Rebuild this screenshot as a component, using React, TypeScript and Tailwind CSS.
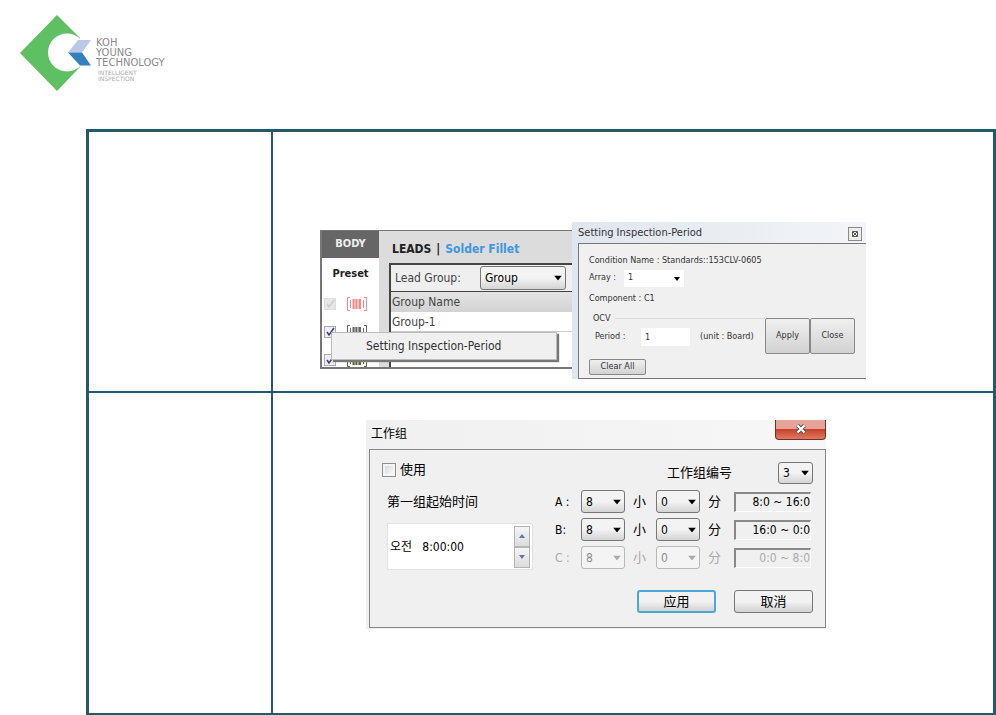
import React from 'react';
import clsx from 'clsx';

interface SelectProps {
  label: string;
  value: string;
  className?: string;
  disabled?: boolean;
}

const Select: React.FC<SelectProps> = ({ label, value, className, disabled }) => (
  <div className={clsx('relative', className)}>
    <select
      aria-label={label}
      disabled={disabled}
      defaultValue={value}
      className={clsx(
        'block h-full w-full appearance-none rounded-[3px] border pl-1 outline-none',
        disabled
          ? 'border-[#b8b8b8] bg-[#f4f4f4] text-[#8d8d8d]'
          : 'border-[#777] bg-linear-to-b from-[#f3f3f3] from-50% to-[#d4d4d4] text-black',
      )}
    >
      <option>{value}</option>
    </select>
    <svg
      viewBox="0 0 8 5"
      className={clsx(
        'pointer-events-none absolute top-1/2 right-1 h-[5px] w-2 -translate-y-1/2',
        disabled ? 'fill-[#aaa]' : 'fill-black',
      )}
    >
      <path d="M0 0h8L4 5z" />
    </svg>
  </div>
);

const Logo = () => (
  <header className="flex items-start pt-3 pl-[18px]">
    <svg viewBox="18 12 76 82" className="h-[82px] w-[76px]">
      <path d="M57 15L20 53l37 38 24-25V39z" fill="#5fc063" />
      <circle cx="67" cy="52.500" r="19" fill="#fff" />
      <path d="M80 37h12v30H80z" fill="#fff" />
      <path d="M78 40h13l-9 12.500H68z" fill="#b9c9e8" />
      <path d="M68 52.500h14L91 65.500H80z" fill="#3480bd" />
    </svg>
    <div className="pt-[26px] pl-0.5 font-['DejaVu_Sans'] text-[10px] leading-[10px] text-[#8a8a8a]">
      {['Koh', 'Young', 'Technology'].map((word) => (
        <div key={word} className="uppercase">
          {word}
        </div>
      ))}
      <div className="pt-0.5 pl-0.5 text-[6px] leading-[6px] text-[#aaa] uppercase">
        Intelligent
        <br />
        Inspection
      </div>
    </div>
  </header>
);

const presets = [
  { id: 1, checked: true, disabled: true, icon: 'text-[#f58a8a]' },
  { id: 2, checked: true, disabled: false, icon: 'text-[#666]' },
  { id: 3, checked: true, disabled: false, icon: 'text-[#5b6335]' },
];

const LeadsPanel = () => (
  <div className="relative mt-2 h-[140px] w-[252px] text-[12px]">
    <div className="flex h-[139px] overflow-hidden border-t border-b-2 border-l-2 border-[#777] bg-[#dcdcdc]">
      <div className="w-[57px] shrink-0 bg-white">
        <div className="flex h-[27px] items-center justify-center bg-[#666] text-[11px] font-bold text-[#eee]">
          BODY
        </div>
        <div className="flex h-8 items-center justify-center text-[11px] font-bold text-[#222]">Preset</div>
        {presets.map((p) => (
          <div key={p.id} className="flex h-7 items-center gap-[10px] pl-0.5">
            <label className="relative block size-3">
              <input
                type="checkbox"
                aria-label={`Preset ${p.id}`}
                defaultChecked={p.checked}
                disabled={p.disabled}
                className="block size-3 appearance-none border border-[#aaa] bg-[#eeeefa] disabled:border-[#ddd] disabled:bg-[#e8e8e8]"
              />
              <svg
                viewBox="0 0 12 12"
                className={clsx('absolute inset-0 fill-none', p.disabled ? 'stroke-[#ccc]' : 'stroke-[#3c3c70]')}
              >
                <path d="M3 6l2 3 5-7" strokeWidth="1.500" />
              </svg>
            </label>
            <svg viewBox="0 0 22 16" className={clsx('h-4 w-[22px] fill-none stroke-current', p.icon)}>
              <path d="M4 1.500H1.500v13H4M18 1.500h2.500v13H18" />
              <path d="M4.500 4v8M17.500 4v8" />
              <path d="M7.500 3v10M10.500 3v10M14 3v10" strokeWidth="2" />
              <path d="M9 3v10M12.500 3v10" strokeWidth=".6" />
            </svg>
          </div>
        ))}
      </div>
      <div className="flex-1 pl-[10px]">
        <div className="flex h-8 items-center gap-[5px] pt-1 pl-[3px] text-[12px] font-bold text-[#222]">
          LEADS <span>|</span>
          <a href="#fillet" className="text-[#4295e2]">
            Solder Fillet
          </a>
        </div>
        <div className="border-t-2 border-l-2 border-[#444] bg-white text-[#444]">
          <div className="flex h-[27px] items-center justify-between border-b border-[#444] bg-[#efefef] pr-1.5 pl-1">
            Lead Group:
            <Select label="Lead Group" value="Group" className="h-6 w-[86px]" />
          </div>
          <div className="h-5 bg-linear-to-b from-[#e4e4e4] to-[#d2d2d2] pl-px leading-5">Group Name</div>
          <div className="h-5 border-b border-[#ccc] pl-px leading-5">Group-1</div>
          <div className="h-9" />
        </div>
      </div>
    </div>
    <button className="absolute top-[102px] left-[11px] h-7 w-[226px] border border-[#bbb] bg-[#f0f0f0] pl-[34px] text-left text-[#333] shadow-[2px_2px_1px_#777]">
      Setting Inspection-Period
    </button>
  </div>
);

const grayButton = 'rounded-[2px] border border-[#888] bg-linear-to-b from-[#f0f0f0] to-[#d2d2d2] text-[#333]';

const PeriodDialog = () => (
  <div className="w-[294px] bg-linear-to-r from-[#dfe6ed] to-[#f3f5f8] pl-[6px] text-[9px] text-[#333]">
    <div className="flex h-[21px] items-center justify-between pt-0.5 text-[11px]">
      Setting Inspection-Period
      <button
        aria-label="Close dialog"
        className="mr-1 flex size-[14px] items-center justify-center border border-[#888] bg-[#eee]"
      >
        <svg viewBox="0 0 6 6" className="size-1.5 fill-none stroke-[#555]">
          <path d="M.5 .5h5v5h-5zM1 1l4 4M5 1L1 5" />
        </svg>
      </button>
    </div>
    <div className="border-t border-b border-l border-[#777] bg-[#f0f0f0] pt-2 pr-[11px] pb-[3px] pl-[10px]">
      <div className="h-4 leading-4">Condition Name : Standards::153CLV-0605</div>
      <label className="flex h-5 items-center gap-2">
        Array :
        <span className="relative h-[17px] w-[60px]">
          <select className="block h-full w-full appearance-none bg-white pl-1">
            <option>1</option>
          </select>
          <svg viewBox="0 0 6 4" className="pointer-events-none absolute top-[7px] right-1 h-1 w-1.5 fill-black">
            <path d="M0 0h6L3 4z" />
          </svg>
        </span>
      </label>
      <div className="h-5 leading-5">Component : C1</div>
      <div className="flex items-end pt-1">
        <fieldset className="min-w-0 flex-1 pb-1">
          <div className="flex items-center gap-1 pl-1 leading-3">
            OCV <span className="h-px flex-1 bg-[#ddd]" />
          </div>
          <div className="flex h-[26px] items-center pl-1.5">
            <label htmlFor="period" className="w-[46px]">
              Period :
            </label>
            <input id="period" defaultValue="1" className="h-[18px] w-[49px] bg-white pl-1" />
            <span className="pl-2.5 whitespace-nowrap">(unit : Board)</span>
          </div>
        </fieldset>
        <button className={clsx(grayButton, 'h-9 w-[45px]')}>Apply</button>
        <button className={clsx(grayButton, 'h-9 w-[45px]')}>Close</button>
      </div>
      <button className={clsx(grayButton, 'mt-[5px] block h-4 w-[57px]')}>Clear All</button>
    </div>
  </div>
);

const shifts = [
  { name: 'A :', range: '8:0 ~ 16:0', disabled: false },
  { name: 'B:', range: '16:0 ~ 0:0', disabled: false },
  { name: 'C :', range: '0:0 ~ 8:0', disabled: true },
];

const spinButton =
  'flex h-[21px] w-4 items-center justify-center border border-[#b5b5b5] bg-linear-to-b from-[#f5f5f5] to-[#dcdcdc]';

const WorkGroupDialog = () => (
  <div className="w-[460px] bg-[#f0f0f0] pb-px pl-[3px] text-[12px] text-black">
    <div className="flex h-[29px] items-start justify-between bg-linear-to-r from-[#f0f0f0] to-[#f7f7f7] pl-0.5">
      <h2 className="leading-[28px]">工作组</h2>
      <button
        aria-label="Close"
        className="flex h-5 w-[51px] items-center justify-center rounded-b-[4px] border border-t-0 border-[#70302a] bg-linear-to-b from-[#e5a497] from-45% via-[#c9412c] via-50% to-[#df7a60]"
      >
        <svg viewBox="0 0 12 10" className="mb-0.5 h-[10px] w-3 fill-none">
          <path d="M2.500 1.500l7 7M9.500 1.500l-7 7" stroke="#555" strokeWidth="4" />
          <path d="M2.500 1.500l7 7M9.500 1.500l-7 7" stroke="#fff" strokeWidth="2.200" />
        </svg>
      </button>
    </div>
    <div className="border border-[#888] pt-3 pr-3 pb-[14px] pl-3">
      <div className="flex justify-between">
        <div>
          <label className="flex h-4 items-center gap-1 text-[13px]">
            <input
              type="checkbox"
              className="size-[14px] appearance-none border border-[#8f8f8f] bg-linear-to-br from-[#cfd3d8] to-white shadow-[inset_0_0_0_2px_#f4f4f4]"
            />
            使用
          </label>
          <div className="pl-[5px]">
            <label htmlFor="start" className="block pt-4 text-[13px] leading-4">
              第一组起始时间
            </label>
            <div className="mt-[13px] flex h-[47px] w-[146px] items-center border border-[#dfe2e8] bg-white pr-0.5">
              <input id="start" defaultValue="오전   8:00:00" className="w-0 flex-1 pl-0.5 whitespace-pre outline-none" />
              <div>
                <button aria-label="Later" className={spinButton}>
                  <svg viewBox="0 0 6 4" className="h-1 w-1.5 fill-[#5f73c0]">
                    <path d="M0 4h6L3 0z" />
                  </svg>
                </button>
                <button aria-label="Earlier" className={spinButton}>
                  <svg viewBox="0 0 6 4" className="h-1 w-1.5 fill-[#5f73c0]">
                    <path d="M0 0h6L3 4z" />
                  </svg>
                </button>
              </div>
            </div>
          </div>
        </div>
        <div className="w-[258px]">
          <div className="flex h-[22px] items-center justify-end text-[13px]">
            <span className="pr-[46px]">工作组编号</span>
            <Select label="工作组编号" value="3" className="h-[22px] w-[35px] text-[12px]" />
          </div>
          <div className="flex flex-col gap-1.5 pt-1.5">
            {shifts.map((s) => (
              <div
                key={s.name}
                className={clsx(
                  'grid h-[22px] grid-cols-[26px_44px_31px_44px_34px_79px] items-center',
                  s.disabled && 'text-[#aaa]',
                )}
              >
                <span>{s.name}</span>
                <Select label={`${s.name} 小`} value="8" disabled={s.disabled} className="h-[23px]" />
                <span className="pl-2 text-[13px]">小</span>
                <Select label={`${s.name} 分`} value="0" disabled={s.disabled} className="h-[23px]" />
                <span className="pl-2 text-[13px]">分</span>
                <input
                  readOnly
                  aria-label={`${s.name} range`}
                  value={s.range}
                  className="mr-0.5 h-5 border-t-2 border-r border-b border-l-2 border-t-[#888] border-r-white border-b-white border-l-[#888] text-right outline-none"
                />
              </div>
            ))}
          </div>
        </div>
      </div>
      <div className="flex justify-end gap-[18px] pt-5">
        <button className="h-[23px] w-[79px] rounded-[3px] border-2 border-[#4aa8d8] bg-linear-to-b from-[#f2f2f2] from-50% to-[#d2d2d2] text-[13px] leading-4">
          应用
        </button>
        <button className="h-[23px] w-[79px] rounded-[3px] border border-[#777] bg-linear-to-b from-[#f2f2f2] from-50% to-[#d2d2d2] text-[13px] leading-4">
          取消
        </button>
      </div>
    </div>
  </div>
);

const App: React.FC = () => (
  <div className="bg-white font-['DejaVu_Sans_Condensed','Noto_Sans_CJK_SC','Noto_Sans_CJK_KR',sans-serif]">
    <Logo />
    <main className="mt-[35px] ml-[86px] border-[3px] border-[#23596a]">
      <section className="grid grid-cols-[182px_1fr] border-b-2 border-[#23596a]">
        <div />
        <div className="flex items-start border-l-2 border-[#23596a] pt-[90px] pb-3 pl-[47px]">
          <LeadsPanel />
          <PeriodDialog />
        </div>
      </section>
      <section className="grid grid-cols-[182px_1fr]">
        <div />
        <div className="border-l-2 border-[#23596a] pt-[27px] pb-[84px] pl-[93px]">
          <WorkGroupDialog />
        </div>
      </section>
    </main>
  </div>
);

export default App;
